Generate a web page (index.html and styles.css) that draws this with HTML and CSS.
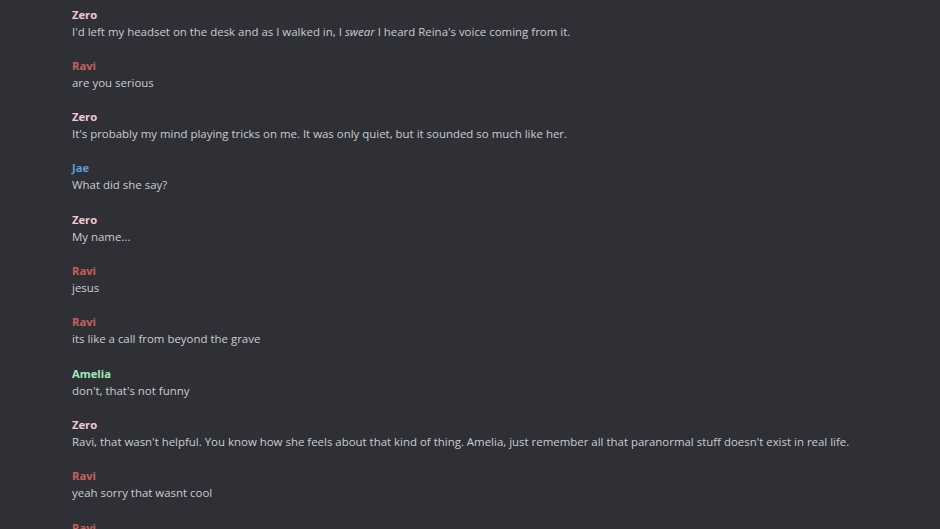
FILE: index.html
```html
<!DOCTYPE html>
<html>
<head>
<meta charset="utf-8">
<link rel="stylesheet" href="styles.css">
</head>
<body>
<div class="chat">
  <div class="msg"><div class="name zero">Zero</div><div class="text">I'd left my headset on the desk and as I walked in, I <em>swear</em> I heard Reina's voice coming from it.</div></div>
  <div class="msg"><div class="name ravi">Ravi</div><div class="text">are you serious</div></div>
  <div class="msg"><div class="name zero">Zero</div><div class="text">It's probably my mind playing tricks on me. It was only quiet, but it sounded so much like her.</div></div>
  <div class="msg"><div class="name jae">Jae</div><div class="text">What did she say?</div></div>
  <div class="msg"><div class="name zero">Zero</div><div class="text">My name...</div></div>
  <div class="msg"><div class="name ravi">Ravi</div><div class="text">jesus</div></div>
  <div class="msg"><div class="name ravi">Ravi</div><div class="text">its like a call from beyond the grave</div></div>
  <div class="msg"><div class="name amelia">Amelia</div><div class="text">don't, that's not funny</div></div>
  <div class="msg"><div class="name zero">Zero</div><div class="text">Ravi, that wasn't helpful. You know how she feels about that kind of thing. Amelia, just remember all that paranormal stuff doesn't exist in real life.</div></div>
  <div class="msg"><div class="name ravi">Ravi</div><div class="text">yeah sorry that wasnt cool</div></div>
  <div class="msg"><div class="name ravi">Ravi</div></div>
</div>
</body>
</html>
```
FILE: styles.css
```css
html, body {
  margin: 0;
  padding: 0;
  background: #2e3035;
  height: 100%;
  overflow: hidden;
}
.chat {
  padding: 5.5px 0 0 72px;
  display: flex;
  flex-direction: column;
  gap: 17.33px;
  font-family: "Open Sans", "Noto Sans", sans-serif;
}
.msg {
  display: flex;
  flex-direction: column;
}
.name {
  font-size: 11.2px;
  font-weight: 700;
  line-height: 17px;
}
.text {
  font-size: 11.45px;
  line-height: 17px;
  color: #cbcdd1;
}
.text em {
  font-style: italic;
}
.zero { color: #f4c8d2; }
.ravi { color: #c8605c; }
.jae { color: #5f9ad8; }
.amelia { color: #a3ebb8; }
```
